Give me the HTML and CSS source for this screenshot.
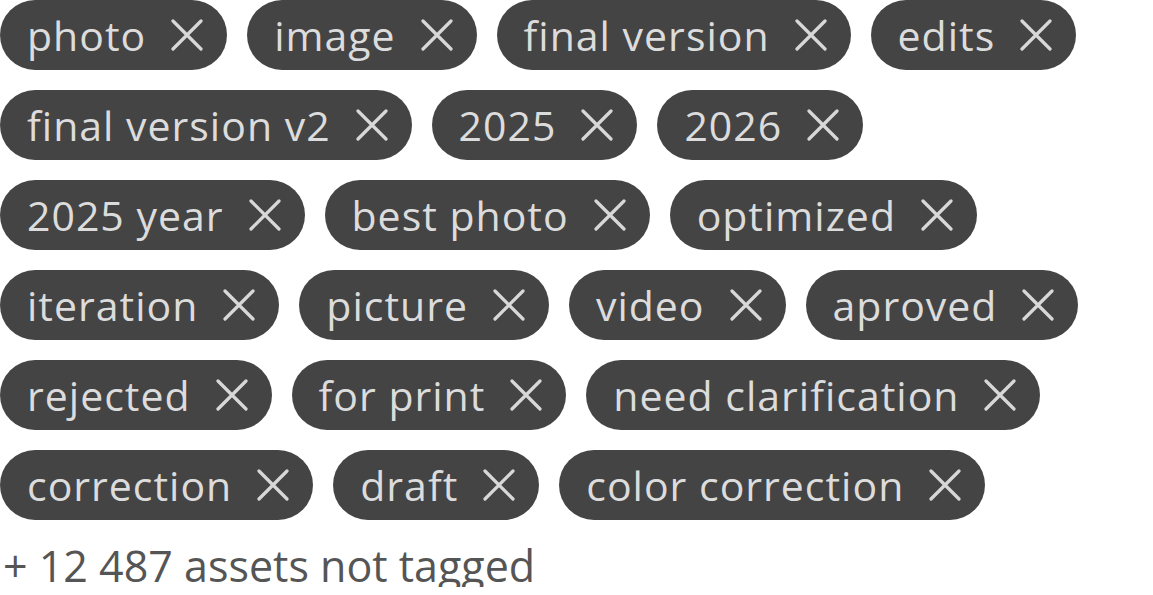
FILE: index.html
```html
<!DOCTYPE html>
<html lang="en">
  <head>
    <meta charset="UTF-8" />
    <title>Tags</title>
    <link rel="stylesheet" href="styles.css">
  </head>
  <body>
    <section class="tags">
      <div class="tags__list">
        <span class="tag">photo<span class="tag__close"></span></span>
        <span class="tag">image<span class="tag__close"></span></span>
        <span class="tag">final version<span class="tag__close"></span></span>
        <span class="tag">edits<span class="tag__close"></span></span>
        <span class="tag">final version v2<span class="tag__close"></span></span>
        <span class="tag">2025<span class="tag__close"></span></span>
        <span class="tag">2026<span class="tag__close"></span></span>
        <span class="tag">2025 year<span class="tag__close"></span></span>
        <span class="tag">best photo<span class="tag__close"></span></span>
        <span class="tag">optimized<span class="tag__close"></span></span>
        <span class="tag">iteration<span class="tag__close"></span></span>
        <span class="tag">picture<span class="tag__close"></span></span>
        <span class="tag">video<span class="tag__close"></span></span>
        <span class="tag">aproved<span class="tag__close"></span></span>
        <span class="tag">rejected<span class="tag__close"></span></span>
        <span class="tag">for print<span class="tag__close"></span></span>
        <span class="tag">need clarification<span class="tag__close"></span></span>
        <span class="tag">correction<span class="tag__close"></span></span>
        <span class="tag">draft<span class="tag__close"></span></span>
        <span class="tag">color correction<span class="tag__close"></span></span>
      </div>
      <p class="tags__untagged">+ 12 487 assets not tagged</p>
    </section>
    <script>
      // X icon for every tag
      const icon =
        '<svg viewBox="0 0 32 32" width="32" height="32"><path d="M2 2L30 30M30 2L2 30" stroke="currentColor" stroke-width="3.2" stroke-linecap="round"/></svg>';
      document.querySelectorAll(".tag__close").forEach((el) => {
        el.innerHTML = icon;
      });
    </script>
  </body>
</html>
```

FILE: styles.css
```css
body {
  margin: 0;
  font-family: "Open Sans", "Noto Sans", sans-serif;
  background: #fff;
}

.tags__list {
  display: flex;
  flex-wrap: wrap;
  gap: 20px;
  width: 1120px;
}

.tag {
  display: inline-flex;
  align-items: center;
  height: 70px;
  padding: 0 24px 0 27px;
  background-color: #444;
  color: #dcdcdc;
  font-size: 41px;
  letter-spacing: 1px;
  border-radius: 35px;
  box-sizing: border-box;
  white-space: nowrap;
}

.tag__close {
  display: flex;
  margin-left: 25px;
  color: #d8d8d8;
}

.tags__untagged {
  margin: 24px 0 0 3px;
  font-size: 43px;
  color: #555;
  line-height: 1;
}
```
